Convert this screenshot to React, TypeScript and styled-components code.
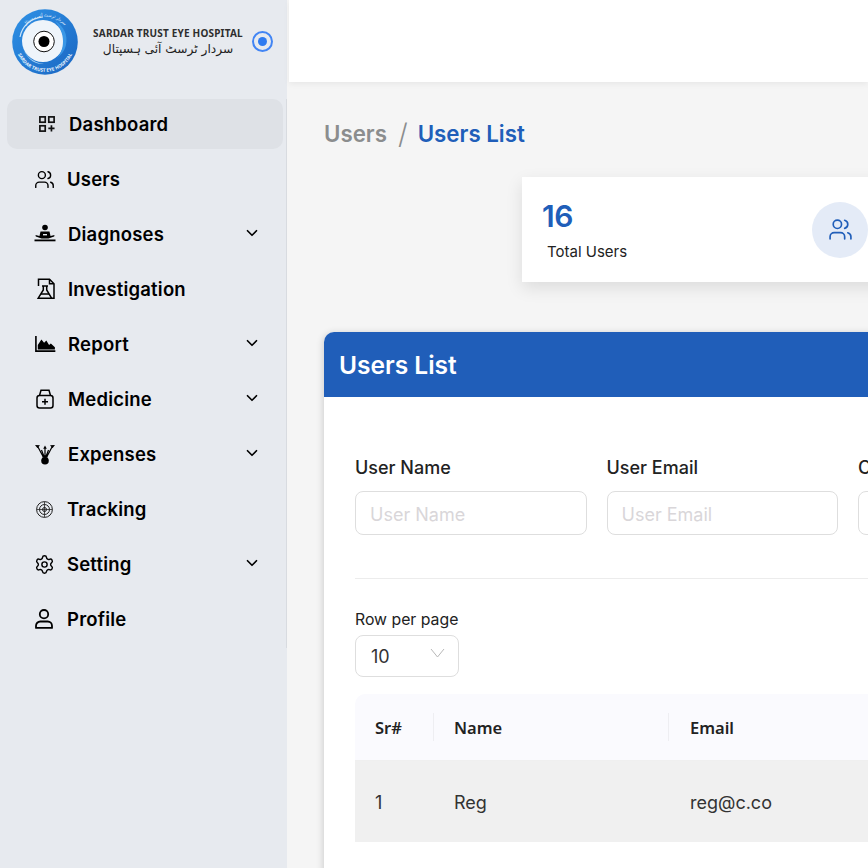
import React from "react";
import styled, { createGlobalStyle } from "styled-components";
import { Users, ChevronDown, Settings } from "lucide-react";

const Global = createGlobalStyle`
  html, body { margin: 0; padding: 0; height: 100%; overflow: hidden; background: #f5f5f5; }
  * { box-sizing: border-box; }
  #root { font-family: "Inter", "Noto Sans", sans-serif; }
`;

const Shell = styled.div`
  display: flex;
  width: 868px;
  height: 868px;
  overflow: hidden;
  background: #f5f5f5;
`;
const Sidebar = styled.aside`
  flex: 0 0 287px;
  height: 868px;
  background: #e7eaef;
  padding: 0 0 0 7px;
`;
const Brand = styled.div`
  display: flex;
  align-items: center;
  height: 83px;
  padding-left: 5px;
`;
const BrandText = styled.div`
  margin-left: 14px;
  width: 152px;
  text-align: center;
`;
const BrandName = styled.div`
  font: 700 10px/12px "Noto Sans", sans-serif;
  letter-spacing: .2px;
  color: #2e2e2e;
  white-space: nowrap;
`;
const BrandUrdu = styled.div`
  margin-top: 2px;
  font: 400 12.2px/16px "DejaVu Sans", sans-serif;
  color: #222;
  white-space: nowrap;
`;
const Radio = styled.div`
  margin-left: 8px;
  width: 21px;
  height: 21px;
  border-radius: 50%;
  border: 2px solid #4285f4;
  display: flex;
  align-items: center;
  justify-content: center;
  &::after { content: ""; width: 9px; height: 9px; border-radius: 50%; background: #2f7bf0; }
`;
const Nav = styled.nav`
  display: flex;
  flex-direction: column;
  margin-top: 16px;
  gap: 5px;
  padding-right: 3px;
  padding-bottom: 4px;
  border-right: 1px solid #d8dbe0;
`;
const Item = styled.div<{ $active?: boolean }>`
  height: 50px;
  display: flex;
  align-items: center;
  border-radius: 10px;
  padding-left: ${p => (p.$active ? 32 : 26)}px;
  background: ${p => (p.$active ? "#dee1e6" : "transparent")};
  color: #000;
`;
const IconBox = styled.span<{ $w: number; $x?: number }>`
  width: ${p => p.$w}px;
  padding-left: ${p => p.$x ?? 0}px;
  flex: none;
  display: flex;
  align-items: center;
`;
const Label = styled.span`
  font: 600 18.5px/24px "Inter", sans-serif;
  letter-spacing: .2px;
`;
const Chevron = styled.span`
  margin-left: auto;
  margin-right: 22px;
  display: flex;
  margin-top: -3px;
`;
const Main = styled.main`
  flex: 1;
  min-width: 0;
  padding-left: 2px;
`;
const Topbar = styled.header`
  height: 82px;
  background: #fff;
  box-shadow: 0 2px 6px rgba(0,0,0,.06);
`;
const Content = styled.div`
  padding: 0 0 0 35px;
`;
const Crumbs = styled.div`
  display: flex;
  align-items: center;
  height: 40px;
  margin-top: 32px;
  font: 600 22.3px/32px "Inter", sans-serif;
`;
const CrumbMuted = styled.span`color: #8b8d8e;`;
const CrumbSep = styled.span`color: #8b8d8e; font-weight: 300; font-size: 28px; margin: 0 10px 0 11px;`;
const CrumbCurrent = styled.span`color: #205eb9;`;
const StatRow = styled.div`
  margin: 23px 0 0 198px;
`;
const StatCard = styled.div`
  width: 420px;
  height: 105px;
  background: #fff;
  box-shadow: 0 6px 16px rgba(0,0,0,.1);
  display: flex;
  justify-content: space-between;
  align-items: center;
  padding: 0 0 0 20px;
`;
const StatValue = styled.div`
  font: 600 30px/40px "Inter", sans-serif;
  letter-spacing: -.5px;
  color: #205eb9;
  margin-top: -1px;
`;
const StatLabel = styled.div`
  font: 400 15px/20px "Inter", sans-serif;
  color: #222;
  margin: 6px 0 0 5px;
`;
const StatBadge = styled.div`
  margin-right: 74px;
  width: 56px;
  height: 56px;
  border-radius: 50%;
  background: #e4ebf7;
  color: #205eb9;
  display: flex;
  align-items: center;
  justify-content: center;
`;
const Card = styled.section`
  margin-top: 50px;
  width: 640px;
  background: #fff;
  border-radius: 10px 10px 0 0;
  box-shadow: -1px 1px 7px rgba(0,0,0,.16);
  height: 560px;
`;
const CardHead = styled.div`
  height: 65px;
  background: #205eb9;
  border-radius: 10px 10px 0 0;
  padding-left: 15px;
  display: flex;
  align-items: center;
  color: #fff;
  font: 600 24.5px/32px "Inter", sans-serif;
`;
const CardBody = styled.div`
  padding: 59px 0 0 31px;
`;
const Filters = styled.div`
  display: flex;
  gap: 20px;
  padding-bottom: 43px;
  border-bottom: 1px solid #ececec;
`;
const Field = styled.div`
  width: 231.5px;
  flex: none;
`;
const FieldLabel = styled.div`
  font: 500 18px/24px "Inter", sans-serif;
  color: #222;
  margin-bottom: 11px;
`;
const Input = styled.div`
  height: 44px;
  border: 1px solid #dedede;
  border-radius: 8px;
  padding: 3px 0 0 14px;
  display: flex;
  align-items: center;
  font: 400 18px/24px "Inter", sans-serif;
  color: #d9d6d9;
`;
const RowLabel = styled.div`
  margin-top: 31px;
  font: 400 15.8px/20px "Inter", sans-serif;
  color: #222;
`;
const Select = styled.div`
  margin-top: 5px;
  width: 104px;
  height: 42px;
  border: 1px solid #dedede;
  border-radius: 8px;
  padding: 2px 13px 0 15px;
  display: flex;
  align-items: center;
  justify-content: space-between;
  font: 400 18px/24px "Inter", sans-serif;
  color: #333;
`;
const SelectArrow = styled.svg`
  margin-top: -9px;
`;
const TableBox = styled.div`
  margin-top: 17px;
  width: 600px;
`;
const THead = styled.div`
  display: grid;
  grid-template-columns: 79px 235px 1fr;
  height: 67px;
  background: #fafafe;
  border-radius: 10px 10px 0 0;
  border-bottom: 1px solid #efefef;
  align-items: center;
`;
const Th = styled.div<{ $line?: boolean }>`
  padding: 1px 0 0 20px;
  height: 28px;
  display: flex;
  align-items: center;
  font: 600 16.5px/24px "Noto Sans", sans-serif;
  color: #222;
  border-right: ${p => (p.$line ? "1px solid #eeeef2" : "none")};
  &:last-child { padding-left: 21px; }
`;
const TRow = styled.div`
  display: grid;
  grid-template-columns: 79px 235px 1fr;
  height: 81px;
  background: #f0f0f0;
  align-items: center;
`;
const Td = styled.div`
  padding: 2px 0 0 20px;
  font: 400 18px/24px "Inter", sans-serif;
  color: #333;
  &:last-child { padding-left: 21px; }
`;

const DashIcon = () => (
  <svg width="16" height="16" viewBox="0 0 18 18" fill="none" stroke="#111" strokeWidth="1.900">
    <rect x="1" y="1" width="6" height="6" />
    <rect x="11" y="1" width="6" height="6" />
    <rect x="1" y="11" width="6" height="6" />
    <path d="M14 10.500v7M10.500 14h7" />
  </svg>
);
const GraphIcon = () => (
  <svg width="22" height="18" viewBox="0 0 24 20" fill="#000">
    <path d="M1 1h1.800v16H23.500v2H1z" />
    <path d="M4 16v-5l4-6 3 3.500 2.500-2.500 3 5 2-1.500 4.500 4V16z" />
  </svg>
);
const DoctorIcon = () => (
  <svg width="22" height="20" viewBox="0 0 22 20" fill="#000">
    <circle cx="11" cy="3.500" r="2.800" />
    <path d="M6.500 7.500h9l1 4.500 4-1-.3 1.400-5.700 2H7.500l-5.700-2-.3-1.400 4 1z" />
    <rect x="0.500" y="15.500" width="21" height="1.800" />
    <rect x="9" y="10" width="4" height="1.400" fill="#e7eaef" />
  </svg>
);
const LabDocIcon = () => (
  <svg width="20" height="22" viewBox="0 0 20 22" fill="none" stroke="#000" strokeWidth="1.500">
    <path d="M2.500 8V1.200h11l4.500 4.500V20.200h-3" />
    <path d="M13.500 1.200v4.500H18" />
    <path d="M6 8h6M7.300 8v4L2.200 20.200h13.400L10.700 12V8" />
    <path d="M5 16h8" />
  </svg>
);
const MedIcon = () => (
  <svg width="18" height="20" viewBox="0 0 18 20" fill="none" stroke="#000" strokeWidth="1.500">
    <rect x="1" y="6.500" width="16" height="12.500" rx="2.500" />
    <path d="M3.500 6.500l1.500-5.200h8l1.500 5.200" />
    <path d="M9 9.800v6M6 12.800h6" />
  </svg>
);
const ExpenseIcon = () => (
  <svg width="20" height="21" viewBox="0 0 20 21" fill="#000" stroke="#000">
    <path d="M10 12.500V4M8 12.500L3 3M12 12.500L17 3M9 12.500L6.500 6M11 12.500L13.500 6" strokeWidth="1.200" fill="none" />
    <path d="M0 1l5 .3-2.500 3zM20 1l-5 .3 2.500 3zM10 1.500l1.800 3.200H8.200z" stroke="none" />
    <circle cx="10" cy="16.800" r="3.800" stroke="none" />
    <rect x="7.500" y="11.500" width="5" height="2.200" stroke="none" />
  </svg>
);
const TrackIcon = () => (
  <svg width="17" height="17" viewBox="0 0 17 17" fill="none" stroke="#222" strokeWidth="1">
    <circle cx="8.500" cy="8.500" r="7.900" />
    <circle cx="8.500" cy="8.500" r="5" />
    <circle cx="8.500" cy="8.500" r="2" />
    <path d="M8.500 .7v15.600M.7 8.500h15.600" strokeWidth=".8" />
  </svg>
);
const ProfileIcon = () => (
  <svg width="18" height="20" viewBox="0 0 18 20" fill="none" stroke="#000" strokeWidth="1.800">
    <circle cx="9" cy="5.200" r="4.200" />
    <path d="M1 18.900v-2.100a4.300 4.300 0 0 1 4.300-4.300h7.400a4.300 4.300 0 0 1 4.300 4.300v2.100z" strokeLinejoin="round" />
  </svg>
);
const Logo = () => (
  <svg width="66" height="66" viewBox="0 0 66 66">
    <defs>
      <linearGradient id="ring" x1="0" y1="0" x2="1" y2="1">
        <stop offset="0" stopColor="#2f92e6" />
        <stop offset="1" stopColor="#1a66c2" />
      </linearGradient>
      <path id="bottomArc" d="M3.800 39A29.800 29.800 0 0 0 62.200 39" />
      <path id="topArc" d="M10 22A25.500 25.500 0 0 1 56 22" />
    </defs>
    <circle cx="33" cy="33" r="32.800" fill="url(#ring)" />
    <circle cx="31" cy="32" r="21" fill="#eef4fa" />
    <path d="M43 12c9 5 13 14 11 24-1.500 6-5 10-9 13 4-5 6-10 6-17 0-7-3-14-8-20z" fill="#3a97e6" />
    <path d="M10 34c1 11 10 20 22 21-9 1-20-6-22-21z" fill="#a9d3f3" />
    <path d="M8 28C10 17 19 9 31 8" fill="none" stroke="#cfe6f8" strokeWidth="1.100" />
    <circle cx="32" cy="32.500" r="10.300" fill="#fff" stroke="#111" strokeWidth="1" />
    <circle cx="32" cy="32.500" r="5.500" fill="#000" />
    <text fill="#eaf4fc" fontFamily="Noto Sans, sans-serif" fontWeight="700" fontSize="4.700">
      <textPath href="#bottomArc" startOffset="50%" textAnchor="middle">SARDAR TRUST EYE HOSPITAL</textPath>
    </text>
    <text fill="#eaf4fc" fontFamily="DejaVu Sans, sans-serif" fontSize="4.200">
      <textPath href="#topArc" startOffset="50%" textAnchor="middle">سردار ٹرسٹ آئی ہسپتال</textPath>
    </text>
  </svg>
);

const items = [
  { t: "Users", i: <Users size={21} strokeWidth={1.6} />, w: 34, x: 1 },
  { t: "Diagnoses", i: <DoctorIcon />, w: 35, x: 1, c: 1 },
  { t: "Investigation", i: <LabDocIcon />, w: 35, x: 3 },
  { t: "Report", i: <GraphIcon />, w: 35, x: 1, c: 1 },
  { t: "Medicine", i: <MedIcon />, w: 35, x: 3, c: 1 },
  { t: "Expenses", i: <ExpenseIcon />, w: 35, x: 2, c: 1 },
  { t: "Tracking", i: <TrackIcon />, w: 34, x: 3 },
  { t: "Setting", i: <Settings size={21} strokeWidth={1.6} />, w: 34, x: 1, c: 1 },
  { t: "Profile", i: <ProfileIcon />, w: 34, x: 2 },
];

export default function App() {
  return (
    <Shell>
      <Global />
      <Sidebar>
        <Brand>
          <Logo />
          <BrandText>
            <BrandName>SARDAR TRUST EYE HOSPITAL</BrandName>
            <BrandUrdu dir="rtl">سردار ٹرسٹ آئی ہسپتال</BrandUrdu>
          </BrandText>
          <Radio />
        </Brand>
        <Nav>
          <Item $active>
            <IconBox $w={30}><DashIcon /></IconBox>
            <Label>Dashboard</Label>
          </Item>
          {items.map(it => (
            <Item key={it.t}>
              <IconBox $w={it.w} $x={it.x}>{it.i}</IconBox>
              <Label>{it.t}</Label>
              {it.c ? <Chevron><ChevronDown size={18} strokeWidth={2.2} /></Chevron> : null}
            </Item>
          ))}
        </Nav>
      </Sidebar>
      <Main>
        <Topbar />
        <Content>
          <Crumbs>
            <CrumbMuted>Users</CrumbMuted>
            <CrumbSep>/</CrumbSep>
            <CrumbCurrent>Users List</CrumbCurrent>
          </Crumbs>
          <StatRow>
            <StatCard>
              <div>
                <StatValue>16</StatValue>
                <StatLabel>Total Users</StatLabel>
              </div>
              <StatBadge><Users size={25} strokeWidth={1.6} /></StatBadge>
            </StatCard>
          </StatRow>
          <Card>
            <CardHead>Users List</CardHead>
            <CardBody>
              <Filters>
                <Field><FieldLabel>User Name</FieldLabel><Input>User Name</Input></Field>
                <Field><FieldLabel>User Email</FieldLabel><Input>User Email</Input></Field>
                <Field><FieldLabel>City</FieldLabel><Input>City</Input></Field>
              </Filters>
              <RowLabel>Row per page</RowLabel>
              <Select>
                10
                <SelectArrow width="15" height="10" viewBox="0 0 15 10" fill="none" stroke="#b8b8b8" strokeWidth="1">
                  <path d="M1 1l6.500 8L14 1" />
                </SelectArrow>
              </Select>
              <TableBox>
                <THead>
                  <Th $line>Sr#</Th>
                  <Th $line>Name</Th>
                  <Th>Email</Th>
                </THead>
                <TRow>
                  <Td>1</Td>
                  <Td>Reg</Td>
                  <Td>reg@c.co</Td>
                </TRow>
              </TableBox>
            </CardBody>
          </Card>
        </Content>
      </Main>
    </Shell>
  );
}
